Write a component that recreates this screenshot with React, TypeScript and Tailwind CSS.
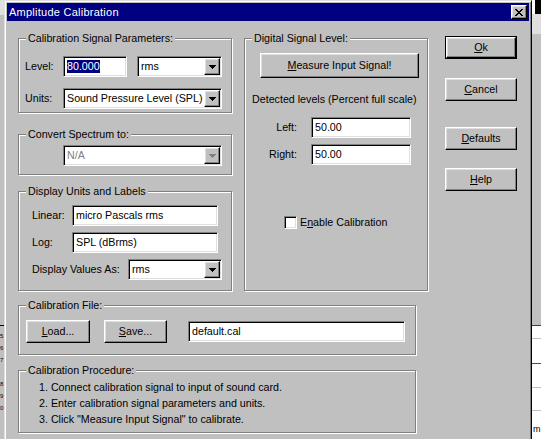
import React from 'react'

const field =
  'bg-white border border-t-[#808080] border-l-[#808080] border-b-white border-r-white shadow-[inset_1px_1px_0_#000000,inset_-1px_-1px_0_#dfdfdf]'
const raised =
  'bg-[#c0c0c0] border border-t-white border-l-white border-b-black border-r-black shadow-[inset_-1px_-1px_0_#808080,inset_1px_1px_0_#dfdfdf]'

const Arrow = ({ disabled = false }: { disabled?: boolean }) => (
  <div className={`${raised} m-[1px] w-[16px] shrink-0 flex items-center justify-center`}>
    <svg width="7" height="4" viewBox="0 0 7 4" shapeRendering="crispEdges">
      <path d="M0 0h7v1h-1v1h-1v1h-1v1h-1v-1h-1v-1h-1v-1h-1z" fill={disabled ? '#808080' : '#000000'} />
    </svg>
  </div>
)

const Combo = ({ value, className, disabled = false }: { value: string; className: string; disabled?: boolean }) => (
  <div className={`${field} h-[21px] flex items-stretch ${className}`}>
    <div className={`flex-1 flex items-center pl-[3px] overflow-hidden whitespace-nowrap ${disabled ? 'text-[#808080]' : ''}`}>
      {value}
    </div>
    <Arrow disabled={disabled} />
  </div>
)

const TextBox = ({ children, className }: { children: React.ReactNode; className: string }) => (
  <div className={`${field} h-[21px] flex items-center pl-[3px] whitespace-nowrap overflow-hidden ${className}`}>
    {children}
  </div>
)

const Group = ({ title, className, children }: { title: string; className: string; children?: React.ReactNode }) => (
  <div className={`relative border border-[#808080] shadow-[1px_1px_0_#ffffff,inset_1px_1px_0_#ffffff] ${className}`}>
    <div className="absolute left-[7px] top-[-7px] px-[2px] bg-[#c0c0c0] leading-[13px] whitespace-nowrap">{title}</div>
    {children}
  </div>
)

const Button = ({ children, className }: { children: React.ReactNode; className: string }) => (
  <div className={`${raised} flex items-center justify-center whitespace-nowrap ${className}`}>{children}</div>
)

const TitleBar = () => (
  <div className="h-[18px] bg-[#000080] flex items-center justify-between pl-[2px] pr-[2px] text-[11px]">
    <span className="text-white tracking-[0.25px]">Amplitude Calibration</span>
    <div className={`${raised} w-[16px] h-[14px] flex items-center justify-center`}>
      <svg width="8" height="7" viewBox="0 0 8 7" shapeRendering="crispEdges">
        <path
          d="M0 0h2v1h1v1h2v-1h1v-1h2v1h-1v1h-1v1h-1v1h1v1h1v1h1v1h-2v-1h-1v-1h-2v1h-1v1h-2v-1h1v-1h1v-1h1v-1h-1v-1h-1v-1h-1z"
          fill="#000000"
        />
      </svg>
    </div>
  </div>
)

// bits of the window that sits behind the dialog
const LeftStrip = () => (
  <div className="w-[4px] shrink-0 h-full flex flex-col overflow-hidden">
    <div className="h-[15px] bg-[#dfdfdf]" />
    <div className="h-[310px]" />
    <div className="h-[1px] bg-black" />
    <div className="flex flex-col leading-[12px] text-[6px] pt-[4px]">
      <span>5</span>
      <span>6</span>
      <span>7</span>
      <span className="mt-[12px]">8</span>
      <span>9</span>
      <span>0</span>
    </div>
  </div>
)

const RightStrip = () => (
  <div className="flex-1 h-full flex flex-col overflow-hidden">
    <div className="h-[14px] bg-black flex">
      <div className="w-[3px] bg-white" />
    </div>
    <div className="h-[20px] bg-[#dfdfdf]" />
    <div className="h-[291px]" />
    <div className="h-[1px] bg-[#404040]" />
    <div className="flex-1 bg-white flex flex-col">
      <div className="h-[12px]" />
      <div className="h-[1px] bg-[#c0c0c0]" />
      <div className="h-[24px]" />
      <div className="h-[1px] bg-[#ff0000]" />
      <div className="h-[23px]" />
      <div className="h-[1px] bg-[#c0c0c0]" />
      <div className="h-[22px]" />
      <div className="h-[1px] bg-[#c0c0c0]" />
      <div className="leading-[11px] text-[9px] mt-[13px] pl-[1px]">m</div>
    </div>
  </div>
)

export default function App() {
  return (
    <div className="w-[541px] h-[439px] overflow-hidden flex items-start bg-[#c0c0c0] font-['Liberation_Sans',Arial,sans-serif] text-[10.7px] leading-[13px] text-black">
      <LeftStrip />

      {/* dialog window */}
      <div className="w-[528px] h-[445px] shrink-0 border border-t-[#dfdfdf] border-l-[#dfdfdf] border-b-black border-r-black shadow-[inset_1px_1px_0_#ffffff,inset_-1px_-1px_0_#808080] p-[2px] bg-[#c0c0c0]">
        <TitleBar />

        <div className="flex pl-[11px]">
          <div className="w-[410px] mt-[17px]">
            <div className="flex">
              <div className="w-[214px] flex flex-col">
                <Group title="Calibration Signal Parameters:" className="h-[75px] pt-[17px] pl-[6px]">
                  <div className="flex items-center">
                    <span className="w-[38px]">Level:</span>
                    <TextBox className="w-[64px]">
                      <span className="bg-[#000080] text-white">80.000</span>
                    </TextBox>
                    <Combo value="rms" className="ml-[10px] w-[85px]" />
                  </div>
                  <div className="flex items-center mt-[11px]">
                    <span className="w-[38px]">Units:</span>
                    <Combo value="Sound Pressure Level (SPL)" className="w-[159px]" />
                  </div>
                </Group>

                <Group title="Convert Spectrum to:" className="h-[41px] mt-[21px] pt-[10px] pl-[44px]">
                  <Combo value="N/A" className="w-[159px]" disabled />
                </Group>

                <Group title="Display Units and Labels" className="h-[100px] mt-[16px] pt-[13px] pl-[13px]">
                  <div className="flex items-center">
                    <span className="w-[40px]">Linear:</span>
                    <TextBox className="w-[146px]">micro Pascals rms</TextBox>
                  </div>
                  <div className="flex items-center mt-[6px]">
                    <span className="w-[40px]">Log:</span>
                    <TextBox className="w-[146px]">SPL (dBrms)</TextBox>
                  </div>
                  <div className="flex items-center mt-[6px]">
                    <span className="w-[96px]">Display Values As:</span>
                    <Combo value="rms" className="w-[94px]" />
                  </div>
                </Group>
              </div>

              <Group title="Digital Signal Level:" className="w-[184px] h-[253px] ml-[12px]">
                <div className="pt-[14px] pl-[15px]">
                  <Button className="w-[159px] h-[25px]">
                    <span>
                      <u>M</u>easure Input Signal!
                    </span>
                  </Button>
                </div>
                <div className="pl-[7px] mt-[15px]">Detected levels (Percent full scale)</div>
                <div className="flex items-center mt-[11px]">
                  <span className="w-[52px] text-right">Left:</span>
                  <TextBox className="ml-[14px] w-[100px]">50.00</TextBox>
                </div>
                <div className="flex items-center mt-[6px]">
                  <span className="w-[52px] text-right">Right:</span>
                  <TextBox className="ml-[14px] w-[100px]">50.00</TextBox>
                </div>
                <div className="flex items-center mt-[51px] pl-[39px]">
                  <div className={`${field} w-[13px] h-[13px]`} />
                  <span className="ml-[3px]">
                    E<u>n</u>able Calibration
                  </span>
                </div>
              </Group>
            </div>

            <Group title="Calibration File:" className="w-[398px] h-[50px] mt-[14px] pt-[14px] pl-[7px]">
              <div className="flex items-center">
                <Button className="w-[64px] h-[23px]">
                  <span>
                    <u>L</u>oad...
                  </span>
                </Button>
                <Button className="ml-[14px] w-[63px] h-[23px]">
                  <span>
                    <u>S</u>ave...
                  </span>
                </Button>
                <TextBox className="ml-[21px] w-[217px]">default.cal</TextBox>
              </div>
            </Group>

            <Group title="Calibration Procedure:" className="w-[398px] h-[63px] mt-[15px] pt-[8px] pl-[20px]">
              <div className="leading-[16px]">1. Connect calibration signal to input of sound card.</div>
              <div className="leading-[16px]">2. Enter calibration signal parameters and units.</div>
              <div className="leading-[16px]">3. Click "Measure Input Signal" to calibrate.</div>
            </Group>
          </div>

          <div className="ml-[17px] mt-[15px] w-[72px] flex flex-col">
            <div className="border border-black h-[23px] flex">
              <Button className="flex-1">
                <span>
                  <u>O</u>k
                </span>
              </Button>
            </div>
            <Button className="h-[23px] mt-[19px]">
              <span>
                <u>C</u>ancel
              </span>
            </Button>
            <Button className="h-[23px] mt-[26px]">
              <span>
                <u>D</u>efaults
              </span>
            </Button>
            <Button className="h-[23px] mt-[18px]">
              <span>
                <u>H</u>elp
              </span>
            </Button>
          </div>
        </div>
      </div>

      <RightStrip />
    </div>
  )
}
